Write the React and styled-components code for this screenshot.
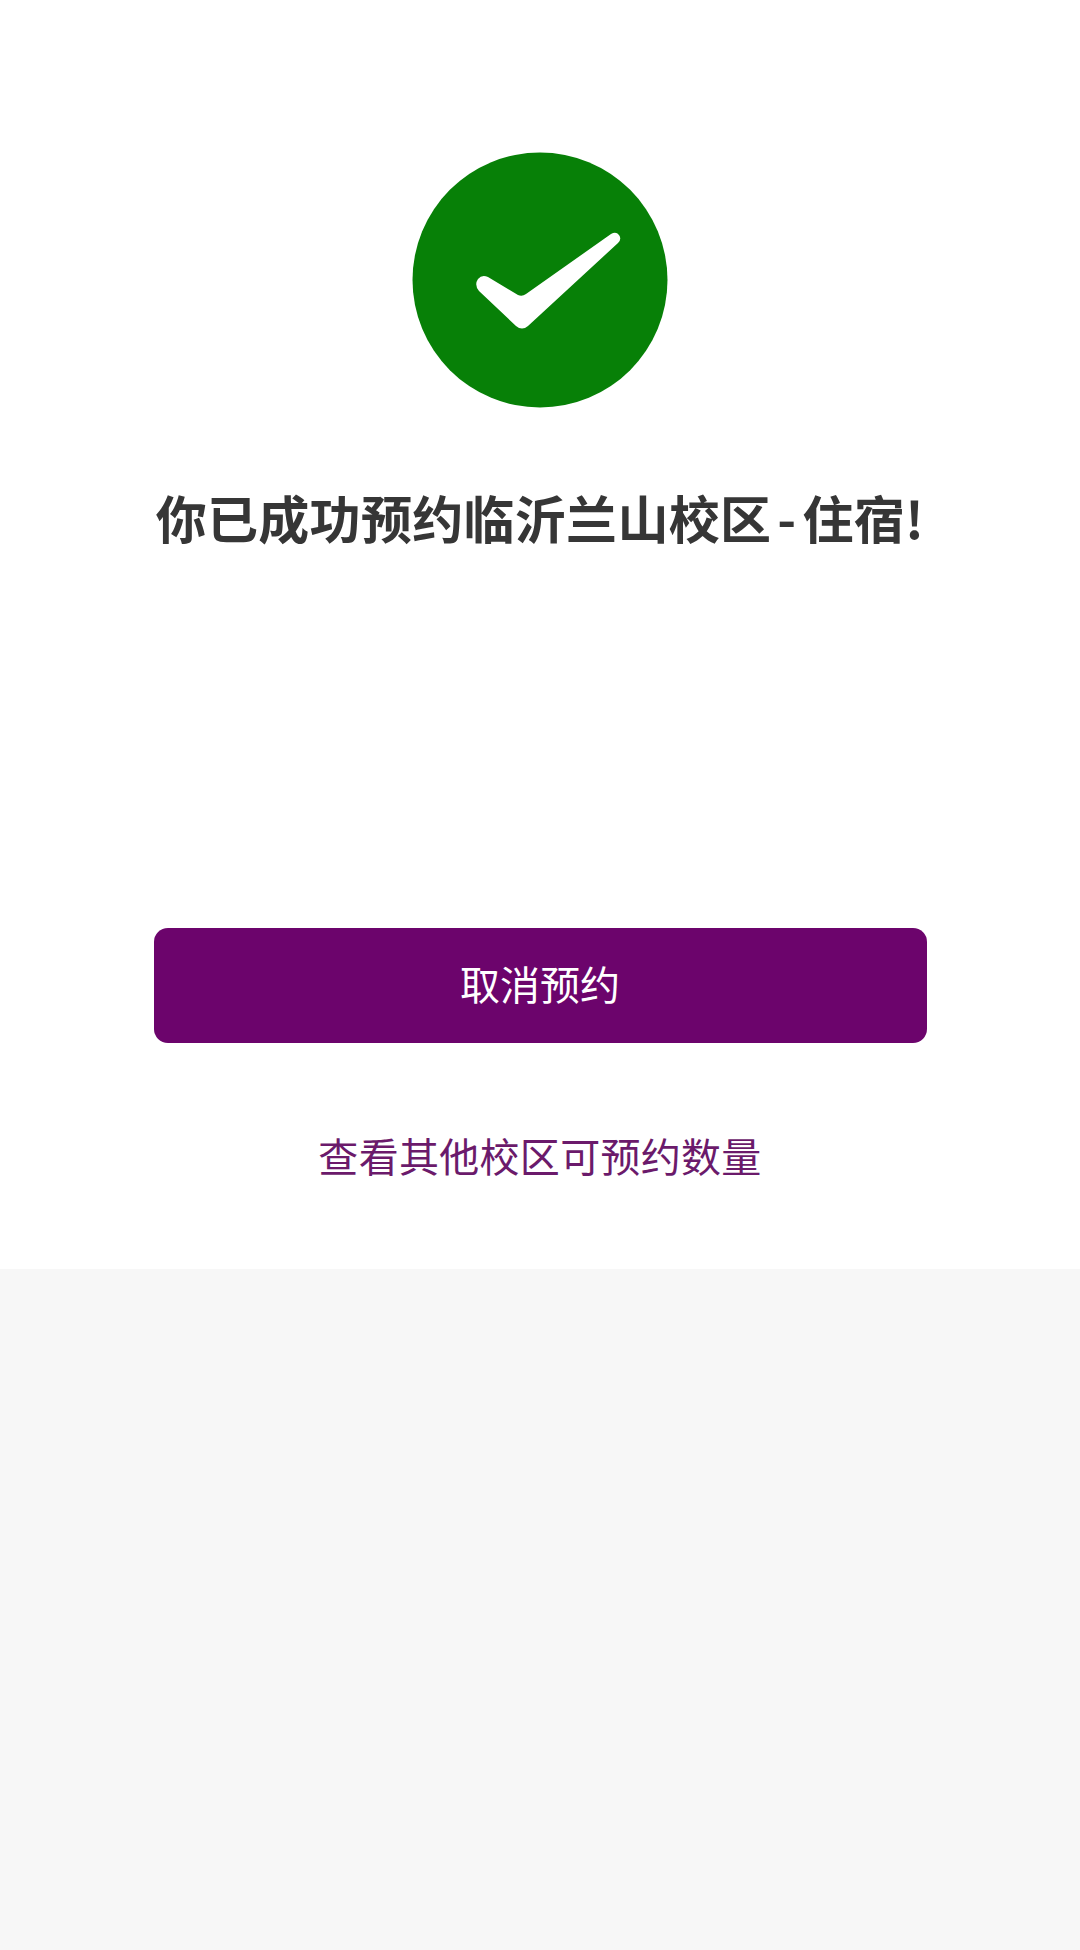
import styled, { createGlobalStyle } from "styled-components";

const GlobalStyle = createGlobalStyle`
  html, body {
    margin: 0;
    padding: 0;
    background: #f7f7f7;
  }
  body {
    font-family: "Noto Sans CJK SC", "Liberation Sans", sans-serif;
  }
`;

const Page = styled.div`
  width: 1080px;
  height: 1950px;
  background: #f7f7f7;
`;

const Panel = styled.div`
  height: 1269px;
  box-sizing: border-box;
  padding-top: 152px;
  background: #fff;
  display: flex;
  flex-direction: column;
  align-items: center;
`;

const Badge = styled.svg`
  display: block;
  width: 256px;
  height: 256px;
`;

const Title = styled.h1`
  margin: 71px 0 0;
  height: 76px;
  font-size: 51px;
  line-height: 76px;
  font-weight: 700;
  letter-spacing: 0.3px;
  color: #363636;
  white-space: nowrap;
`;

const Dash = styled.span`
  margin: 0 6px;
`;

const CancelButton = styled.button`
  margin-top: 373px;
  width: 773px;
  height: 115px;
  padding: 0 0 6px;
  border: 0;
  border-radius: 14px;
  background: #6c046c;
  color: #fff;
  font-family: inherit;
  font-size: 40px;
  line-height: 56px;
`;

const OtherLink = styled.a`
  margin-top: 82px;
  font-size: 40px;
  line-height: 60px;
  letter-spacing: 0.3px;
  color: #6b1a6b;
`;

function App() {
  return (
    <Page>
      <GlobalStyle />
      <Panel>
        <Badge viewBox="0 0 256 256">
          <circle cx="128" cy="128" r="127.5" fill="#078007" />
          <path
            d="M66 127 Q70 122 76 125 L106 143 Q110 145 114 142 L199 82 Q204 79 207 83 Q210 87 206 91 L116 174 Q110 179 104 174 L67 139 Q62 133 66 127 Z"
            fill="#fff"
          />
        </Badge>
        <Title>
          你已成功预约临沂兰山校区<Dash>-</Dash>住宿!
        </Title>
        <CancelButton>取消预约</CancelButton>
        <OtherLink>查看其他校区可预约数量</OtherLink>
      </Panel>
    </Page>
  );
}

export default App;
